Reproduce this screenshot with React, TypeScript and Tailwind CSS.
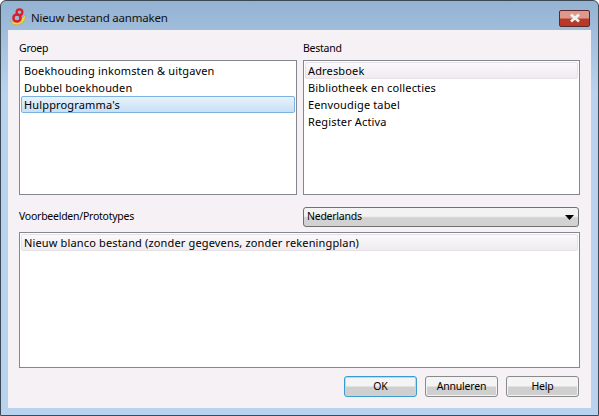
const groups = ["Boekhouding inkomsten & uitgaven", "Dubbel boekhouden", "Hulpprogramma's"];
const files = ["Adresboek", "Bibliotheek en collecties", "Eenvoudige tabel", "Register Activa"];

function Logo() {
  return (
    <svg width="18" height="18" viewBox="0 0 18 18" className="mt-[2px] shrink-0">
      <path d="M1 12.500c3 2.500 9.500 2 13-3.500L16.500 7c.5 3.500-2 8-6.500 9.500-3.500 1-7 0-9-4z" fill="#efd94e" stroke="#c4a02a" strokeWidth="0.6" />
      <circle cx="10.500" cy="4.300" r="2.900" fill="none" stroke="#d8202c" strokeWidth="2.200" />
      <circle cx="8" cy="10" r="3.600" fill="none" stroke="#d8202c" strokeWidth="2.500" />
    </svg>
  );
}

function Row({ label, state }: { label: string; state?: "selected" | "idle" }) {
  const look =
    state === "selected"
      ? "border-[#7db2e0] bg-gradient-to-b from-[#e8f2fb] to-[#c8e0f6] rounded-[2px]"
      : state === "idle"
        ? "border-[#e6e1e6] bg-gradient-to-b from-[#fbf9fb] to-[#efebef] rounded-[2px]"
        : "border-transparent";
  return <div className={`h-[17px] border px-[2px] text-[11px] leading-[15px] whitespace-nowrap tracking-[0.15px] ${look}`}>{label}</div>;
}

function Button({ label, focused }: { label: string; focused?: boolean }) {
  return (
    <button
      className={`h-[21px] w-[73px] rounded-[3px] border bg-gradient-to-b from-[#f4f4f4] from-45% to-[#cfcfcf] to-55% text-center text-[10.500px] leading-[17px] tracking-[-0.2px] text-black ${
        focused ? "border-[#3a9bd0] shadow-[inset_0_0_0_1px_#a8e0f5]" : "border-[#8a8a8a] shadow-[inset_0_0_0_1px_#f4f4f4]"
      }`}
    >
      {label}
    </button>
  );
}

export default function App() {
  return (
    <div className="flex h-[416px] w-[599px] flex-col rounded-t-[6px] border border-[#3c4a55] bg-gradient-to-b from-[#94b2d2] from-0% to-[#b9d3ef] to-[22%] text-[10.500px] tracking-[-0.25px] text-black [font-family:'Noto_Sans','Liberation_Sans',sans-serif]">
      <div className="flex h-[29px] shrink-0 items-center pl-[8px] pr-[8px] pt-[1px]">
        <Logo />
        <span className="ml-[4px] mt-[4px] text-[11.500px] tracking-[-0.2px] text-[#111]">Nieuw bestand aanmaken</span>
        <button className="mt-[4px] ml-auto flex h-[17px] w-[31px] items-center justify-center rounded-[2px] border border-[#5c2a2a] bg-gradient-to-b from-[#dd9a8c] from-45% to-[#b8392a] to-55%">
          <svg width="14" height="10" viewBox="0 0 14 10">
            <path d="M3 1.500 11 8.500M11 1.500 3 8.500" stroke="#f2f2f2" strokeWidth="2.800" />
          </svg>
        </button>
      </div>
      <div className="mx-[7px] mb-[7px] flex flex-1 flex-col bg-[#f5f1f5] px-[11px]">
        <div className="flex gap-[6px] pt-[11px]">
          <section className="flex w-[278px] flex-col">
            <div className="h-[19px] leading-[14px]">Groep</div>
            <div className="h-[135px] border border-[#828790] bg-white p-[1px]">
              {groups.map((g, i) => (
                <Row key={g} label={g} state={i === 2 ? "selected" : undefined} />
              ))}
            </div>
          </section>
          <section className="flex w-[277px] flex-col">
            <div className="h-[19px] leading-[14px]">Bestand</div>
            <div className="h-[135px] border border-[#828790] bg-white p-[1px]">
              {files.map((f, i) => (
                <Row key={f} label={f} state={i === 0 ? "idle" : undefined} />
              ))}
            </div>
          </section>
        </div>
        <div className="mt-[12px] flex h-[20px] items-center gap-[7px]">
          <div className="w-[277px]">Voorbeelden/Prototypes</div>
          <div className="flex h-[20px] w-[276px] items-center justify-between rounded-[3px] border border-[#707070] bg-gradient-to-b from-[#f3f3f3] from-45% to-[#d2d2d2] to-55% pl-[3px] pr-[4px]">
            <span>Nederlands</span>
            <svg width="9" height="5" viewBox="0 0 9 5">
              <path d="M0 0h9L4.500 5z" fill="#000" />
            </svg>
          </div>
        </div>
        <div className="mt-[5px] h-[136px] border border-[#828790] bg-white p-[1px]">
          <Row label="Nieuw blanco bestand (zonder gegevens, zonder rekeningplan)" state="idle" />
        </div>
        <div className="mt-[8px] flex justify-end gap-[8px] pr-[1px]">
          <Button label="OK" focused />
          <Button label="Annuleren" />
          <Button label="Help" />
        </div>
      </div>
    </div>
  );
}
